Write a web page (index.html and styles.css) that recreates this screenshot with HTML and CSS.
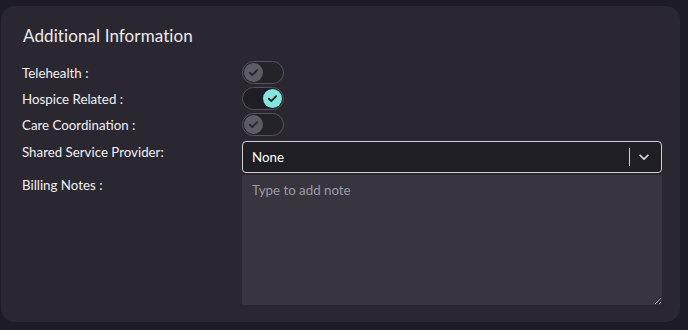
FILE: index.html
```html
<!DOCTYPE html>
<html lang="en">
<head>
    <meta charset="UTF-8">
    <meta name="viewport" content="width=device-width, initial-scale=1.0">
    <title>Additional Information</title>
    <link rel="stylesheet" href="styles.css">
</head>
<body>
    <div class="card">
        <h2 class="title">Additional Information</h2>
        <div class="form">
            <div class="row toggle-row">
                <span class="label">Telehealth :</span>
                <div class="toggle">
                    <span class="knob">
                        <svg viewBox="0 0 16 16" width="13" height="13"><path d="M3.5 8.3l3 3 6-6.2" fill="none" stroke="#26252b" stroke-width="2.2" stroke-linecap="round" stroke-linejoin="round"/></svg>
                    </span>
                </div>
            </div>
            <div class="row toggle-row">
                <span class="label">Hospice Related :</span>
                <div class="toggle on">
                    <span class="knob">
                        <svg viewBox="0 0 16 16" width="13" height="13"><path d="M3.5 8.3l3 3 6-6.2" fill="none" stroke="#1d1c22" stroke-width="2.2" stroke-linecap="round" stroke-linejoin="round"/></svg>
                    </span>
                </div>
            </div>
            <div class="row toggle-row">
                <span class="label">Care Coordination :</span>
                <div class="toggle">
                    <span class="knob">
                        <svg viewBox="0 0 16 16" width="13" height="13"><path d="M3.5 8.3l3 3 6-6.2" fill="none" stroke="#26252b" stroke-width="2.2" stroke-linecap="round" stroke-linejoin="round"/></svg>
                    </span>
                </div>
            </div>
            <div class="row select-row">
                <span class="label">Shared Service Provider:</span>
                <div class="select">
                    <span class="select-value">None</span>
                    <span class="select-sep"></span>
                    <svg class="chevron" viewBox="0 0 16 16" width="14" height="14"><path d="M3.5 6l4.5 4.5 4.5-4.5" fill="none" stroke="#d8d7dc" stroke-width="2" stroke-linecap="round" stroke-linejoin="round"/></svg>
                </div>
            </div>
            <div class="row notes-row">
                <span class="label">Billing Notes :</span>
                <textarea class="notes" placeholder="Type to add note"></textarea>
            </div>
        </div>
    </div>
</body>
</html>
```
FILE: styles.css
```css
body {
    margin: 0;
    background: #1d1b23;
    font-family: "Lato", "Open Sans", sans-serif;
    color: #f1f0f4;
}
.card {
    margin: 6px 8px 8px 1px;
    height: 316px;
    box-sizing: border-box;
    background: #2a2730;
    border-radius: 14px;
    padding: 19px 26px 0 21px;
}
.title {
    margin: 0 0 15px 1px;
    font-size: 17px;
    font-weight: 400;
    letter-spacing: 0.1px;
    color: #ecebf0;
}
.form {
    display: flex;
    flex-direction: column;
}
.row {
    display: grid;
    grid-template-columns: 220px 420px;
    align-items: center;
}
.label {
    font-size: 13.3px;
    color: #f1f0f4;
}
.toggle-row {
    height: 22px;
    margin-bottom: 4px;
}
.toggle {
    width: 38px;
    height: 21px;
    border: 1px solid #55535b;
    border-radius: 12px;
    background: #25232a;
    display: flex;
    align-items: center;
    padding: 0 1px;
}
.knob {
    width: 19px;
    height: 19px;
    border-radius: 50%;
    background: #5d5b63;
    display: flex;
    align-items: center;
    justify-content: center;
}
.toggle.on {
    justify-content: flex-end;
    background: #1f1e24;
}
.toggle.on .knob {
    background: #82e6de;
}
.select-row {
    margin-top: 2px;
    align-items: start;
}
.select-row .label {
    padding-top: 3px;
}
.select {
    height: 32px;
    box-sizing: border-box;
    border: 1px solid #cfced4;
    border-radius: 4px;
    background: #1f1e24;
    display: flex;
    align-items: center;
    padding: 0 10px 0 9px;
}
.select-value {
    flex: 1;
    font-size: 13.3px;
    color: #ffffff;
}
.select-sep {
    width: 1px;
    height: 18px;
    background: #cfced4;
    margin-right: 7px;
}
.notes-row {
    margin-top: 2px;
    align-items: start;
}
.notes-row .label {
    padding-top: 2px;
}
.notes {
    height: 130px;
    box-sizing: border-box;
    border: none;
    border-radius: 2px;
    background: #38353f;
    color: #f1f0f4;
    font-family: "Lato", "Open Sans", sans-serif;
    font-size: 13.3px;
    padding: 7px 10px;
    resize: vertical;
    outline: none;
}
.notes::placeholder {
    color: #9c99a3;
}
```
